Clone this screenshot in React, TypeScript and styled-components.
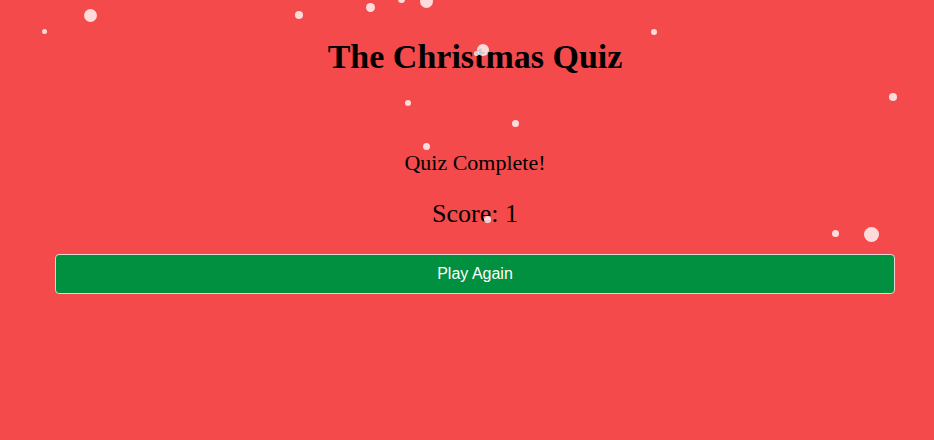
import React from 'react';
import styled, { createGlobalStyle } from 'styled-components';

const GlobalStyle = createGlobalStyle`
    html, body {
        margin: 0;
        padding: 0;
        background: #f44a4b;
    }
`;

const Page = styled.div`
    position: relative;
    width: 100%;
    height: 440px;
    overflow: hidden;
    background: #f44a4b;
    font-family: "Liberation Serif", "DejaVu Serif", serif;
    color: #000;
`;

const Content = styled.main`
    display: flex;
    flex-direction: column;
    align-items: stretch;
    padding: 35px 39px 0 55px;
`;

const Title = styled.h1`
    margin: 0;
    text-align: center;
    font-size: 34px;
    line-height: 44px;
    font-weight: 700;
`;

const Result = styled.section`
    display: flex;
    flex-direction: column;
    align-items: center;
    margin-top: 69px;
`;

const Message = styled.p`
    margin: 0;
    font-size: 22px;
    line-height: 30px;
`;

const Score = styled.p`
    margin: 20px 0 0;
    font-size: 26px;
    line-height: 32px;
`;

const PlayButton = styled.button`
    margin-top: 24px;
    height: 40px;
    background: #00903f;
    color: #fff;
    border: 1px solid #e5d6d6;
    border-radius: 4px;
    font-family: "Liberation Sans", Arial, sans-serif;
    font-size: 16px;
    cursor: pointer;
`;

const Flake = styled.span<{ $size: number }>`
    position: absolute;
    width: ${p => p.$size}px;
    height: ${p => p.$size}px;
    margin: ${p => -p.$size / 2}px 0 0 ${p => -p.$size / 2}px;
    border-radius: 50%;
    background: rgba(255, 255, 255, 0.8);
    pointer-events: none;
`;

const flakes = [
    { x: 90.5, y: 15.5, s: 13 },
    { x: 44, y: 31, s: 5 },
    { x: 299, y: 15, s: 8 },
    { x: 370.5, y: 7.5, s: 9 },
    { x: 401, y: -1, s: 7 },
    { x: 426.5, y: 1.5, s: 13 },
    { x: 483, y: 50, s: 12 },
    { x: 476, y: 53, s: 5 },
    { x: 654, y: 32, s: 6 },
    { x: 408, y: 103, s: 6 },
    { x: 515.5, y: 123.5, s: 7 },
    { x: 426.5, y: 146.5, s: 7 },
    { x: 893, y: 97, s: 8 },
    { x: 487, y: 219.5, s: 7 },
    { x: 835.5, y: 233.5, s: 7 },
    { x: 871.5, y: 234.5, s: 15 },
];

function App() {
    return (
        <React.Fragment>
            <GlobalStyle />
            <Page>
                <Content>
                    <Title>The Christmas Quiz</Title>
                    <Result>
                        <Message>Quiz Complete!</Message>
                        <Score>Score: 1</Score>
                    </Result>
                    <PlayButton>Play Again</PlayButton>
                </Content>
                {flakes.map((f, i) => (
                    <Flake key={i} $size={f.s} style={{ left: f.x, top: f.y }} />
                ))}
            </Page>
        </React.Fragment>
    );
}

export default App;
